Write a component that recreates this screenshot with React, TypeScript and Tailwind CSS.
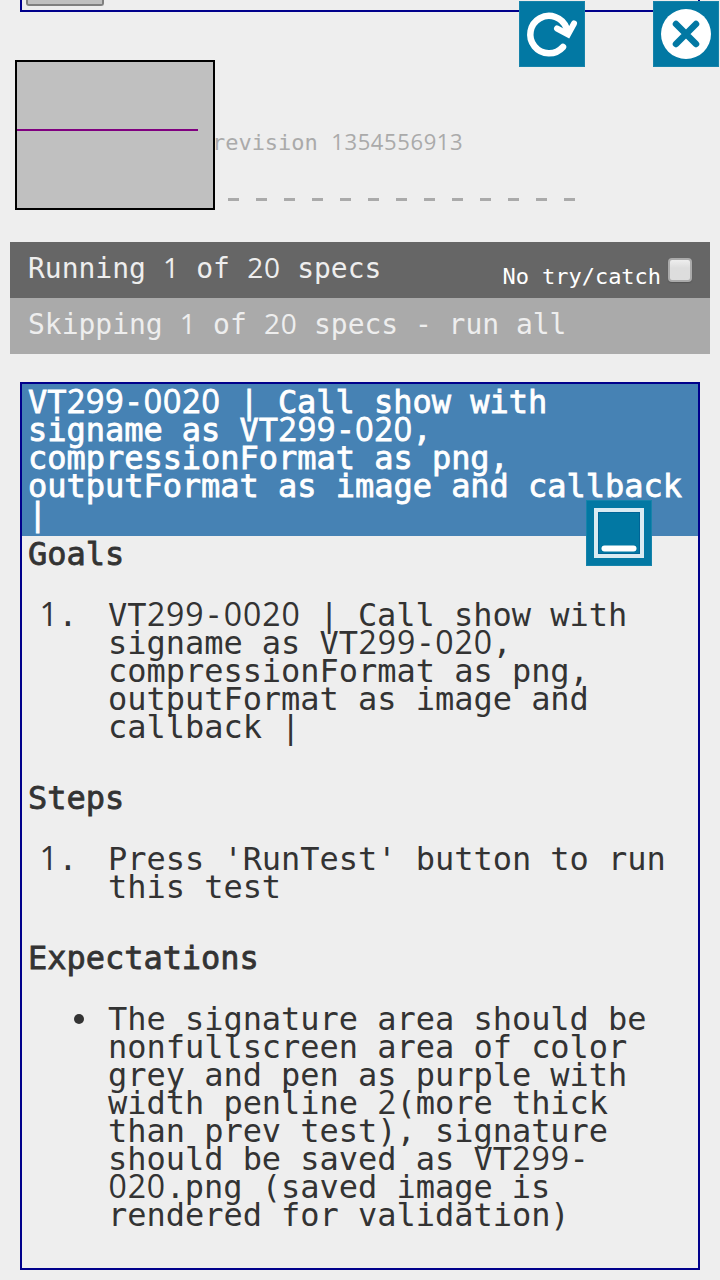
import type { ReactNode } from "react";

/* Digits use a plain, undotted zero; spacing keeps them on the monospace grid. */
function Mono({ children }: { children: string }) {
  return (
    <>
      {children.split(/(\d+)/).map((part, i) =>
        /^\d+$/.test(part) ? (
          <span
            key={i}
            className="relative left-[0.014em] font-['Open_Sans',sans-serif] leading-[0] tracking-[0.0285em]"
          >
            {part}
          </span>
        ) : (
          part
        ),
      )}
    </>
  );
}

function IconTile({ className, children }: { className: string; children: ReactNode }) {
  return (
    <button className={`absolute h-[66px] w-[66px] bg-[#0278a3] shadow-[inset_0_0_0_1px_#1683aa] ${className}`}>
      <svg viewBox="0 0 66 66" className="block h-full w-full" fill="none">
        {children}
      </svg>
    </button>
  );
}

function Heading({ children }: { children: string }) {
  return <h3 className="h-7 px-[6px] [-webkit-text-stroke:0.8px_#333]">{children}</h3>;
}

function Item({ marker, lines }: { marker: ReactNode; lines: string[] }) {
  return (
    <div className="mt-[33px] mb-[43px] flex">
      <div className="w-[86px] shrink-0 pl-[17px]">{marker}</div>
      <div>
        {lines.map((line) => (
          <p key={line} className="h-7 whitespace-nowrap">
            <Mono>{line}</Mono>
          </p>
        ))}
      </div>
    </div>
  );
}

const title = [
  "VT299-0020 | Call show with",
  "signame as VT299-020,",
  "compressionFormat as png,",
  "outputFormat as image and callback",
  "|",
];
const goals = [
  "VT299-0020 | Call show with",
  "signame as VT299-020,",
  "compressionFormat as png,",
  "outputFormat as image and",
  "callback |",
];
const steps = ["Press 'RunTest' button to run", "this test"];
const expectations = [
  "The signature area should be",
  "nonfullscreen area of color",
  "grey and pen as purple with",
  "width penline 2(more thick",
  "than prev test), signature",
  "should be saved as VT299-",
  "020.png (saved image is",
  "rendered for validation)",
];

export default function App() {
  return (
    <div className="relative h-[1280px] w-[720px] overflow-hidden bg-[#eee] font-['DejaVu_Sans_Mono',monospace] tracking-[-0.002em] text-[#333]">
      <div className="mx-5 h-3 border-x-2 border-b-2 border-[#00008b] pl-1">
        <div className="h-[6px] w-[78px] rounded-b-[3px] border-2 border-t-0 border-[#808080] bg-[#c0c0c0]" />
      </div>

      <div className="flex h-[230px] pt-12 pl-[15px]">
        <div className="h-[150px] w-[200px] shrink-0 border-2 border-black bg-[#c0c0c0] pt-[67px]">
          <div className="h-[2px] w-[181px] bg-[#800080]" />
        </div>
        <div className="text-[#aaa]">
          <p className="-ml-[3px] h-24 pt-[69px] text-[22px] leading-7 whitespace-nowrap [clip-path:inset(0_0_0_3px)]">
            <Mono>revision 1354556913</Mono>
          </p>
          <div className="mt-[42px] ml-[13px] flex gap-[17px]">
            {Array.from({ length: 13 }, (_, i) => (
              <i key={i} className="h-[3px] w-[11px] bg-[#aaa]" />
            ))}
          </div>
        </div>
      </div>

      <div className="mx-[10px] text-[28px] leading-7 text-[#eee]">
        <div className="flex h-14 justify-between bg-[#666] pt-[13px] pr-[18px] pl-[18px]">
          <span className="whitespace-nowrap">
            <Mono>Running 1 of 20 specs</Mono>
          </span>
          <label className="flex text-[22px] text-white">
            <span className="pt-2 whitespace-nowrap">No try/catch</span>
            <span className="mt-[3px] ml-[7px] block h-6 w-6 rounded-[4px] border-2 border-[#aaa] bg-linear-to-b from-[#eee] to-[#ddd] to-40% shadow-[0_1px_1px_#555]" />
          </label>
        </div>
        <div className="h-14 bg-[#aaa] pt-[13px] pl-[18px] whitespace-nowrap">
          <Mono>Skipping 1 of 20 specs - run all</Mono>
        </div>
      </div>

      <main className="mx-5 mt-7 h-[888px] border-2 border-[#00008b] text-[32px] leading-7">
        <div className="mb-1 h-[152px] bg-[#4682b4] px-[6px] pt-1 whitespace-nowrap text-white [-webkit-text-stroke:0.8px_white]">
          {title.map((line) => (
            <p key={line} className="h-7">
              <Mono>{line}</Mono>
            </p>
          ))}
        </div>
        <Heading>Goals</Heading>
        <Item marker={<Mono>1.</Mono>} lines={goals} />
        <Heading>Steps</Heading>
        <Item marker={<Mono>1.</Mono>} lines={steps} />
        <Heading>Expectations</Heading>
        <Item
          marker={<span className="mt-[9px] ml-[35px] block h-[10px] w-[10px] rounded-full bg-[#333]" />}
          lines={expectations}
        />
      </main>

      <IconTile className="top-px left-[519px]">
        <path d="M44 46 A18.7 18.7 0 1 1 47.5 27" stroke="white" strokeWidth="6.5" strokeLinecap="round" />
        <path d="M38 27.5 L49 33.5 L55 22.5" stroke="white" strokeWidth="6" strokeLinecap="round" />
      </IconTile>
      <IconTile className="top-px left-[653px]">
        <circle cx="33" cy="33" r="25" fill="white" />
        <path d="M23 23 L43 43 M43 23 L23 43" stroke="#0278a3" strokeWidth="6.5" strokeLinecap="round" />
      </IconTile>
      <IconTile className="top-[500px] left-[586px]">
        <rect x="10" y="10" width="46" height="46" stroke="#d9ebf2" strokeWidth="4" />
        <rect x="12.5" y="12.5" width="41" height="41" stroke="#006496" />
        <path d="M18.5 48.5 H47.5" stroke="white" strokeWidth="6" strokeLinecap="round" />
      </IconTile>
    </div>
  );
}
